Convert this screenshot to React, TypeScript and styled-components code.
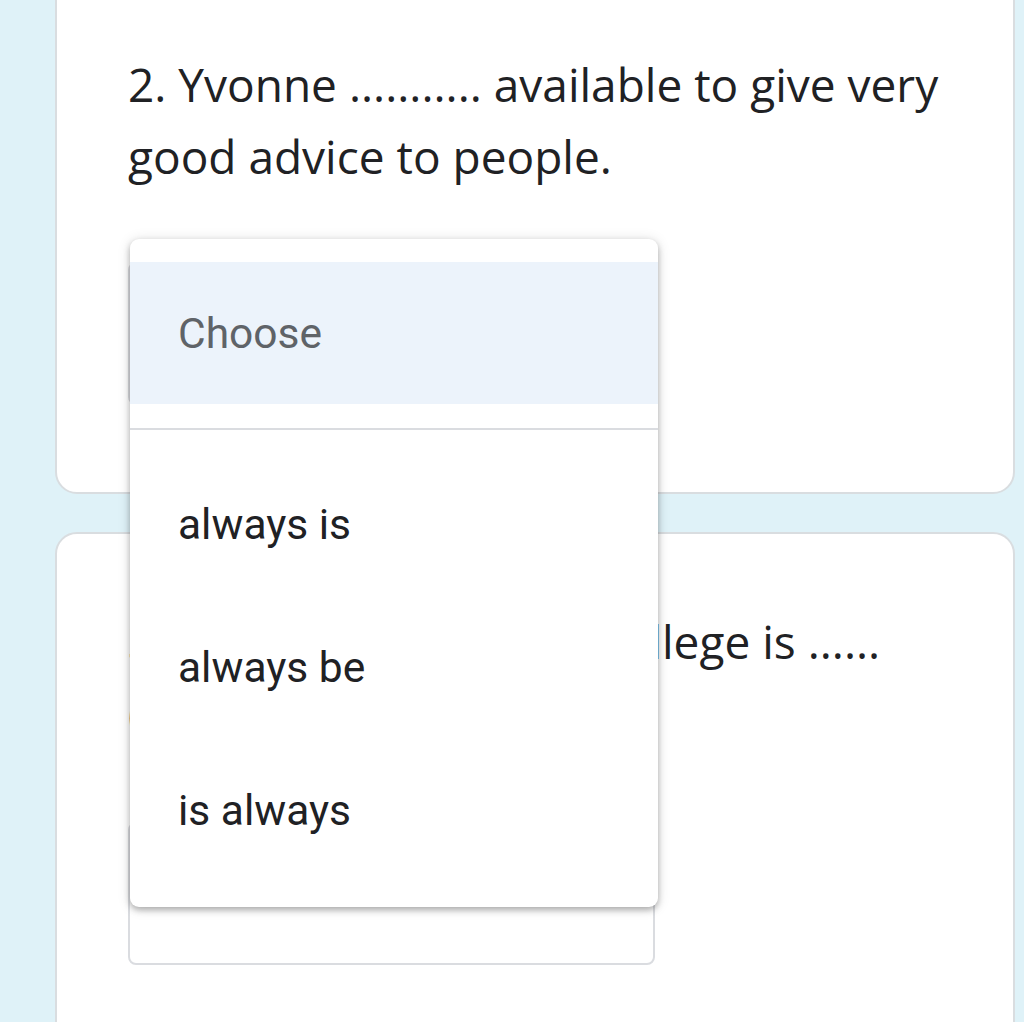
import React from "react";
import styled, { createGlobalStyle } from "styled-components";

const GlobalStyle = createGlobalStyle`
  html, body {
    margin: 0;
    padding: 0;
    background: #dff2f8;
    overflow: hidden;
  }
  * {
    box-sizing: border-box;
  }
`;

const Page = styled.main`
  width: 1024px;
  height: 1022px;
  overflow: hidden;
  padding: 0 9px 0 55px;
  display: flex;
  flex-direction: column;
  gap: 38px;
`;

const Card = styled.section<{ $first?: boolean }>`
  position: relative;
  background: #fff;
  border: 2px solid #d9dde0;
  border-radius: 22px;
  margin-top: ${({ $first }) => ($first ? "-40px" : "0")};
  padding: ${({ $first }) => ($first ? "86px" : "71px")} 40px 86px 71px;
  min-height: ${({ $first }) => ($first ? "534px" : "560px")};
`;

const Question = styled.h2`
  margin: 0;
  font-family: "Open Sans", "Noto Sans", sans-serif;
  font-weight: 400;
  font-size: 46px;
  line-height: 72px;
  color: #202124;
  white-space: nowrap;
`;

const SelectWrap = styled.div<{ $gap: number }>`
  position: relative;
  margin-top: ${({ $gap }) => $gap}px;
  width: 527px;
`;

const SelectBox = styled.div`
  height: 143px;
  border: 2px solid #dadce0;
  border-radius: 8px;
  background: #fff;
`;

const Menu = styled.ul`
  position: absolute;
  left: 2px;
  top: -23px;
  width: 528px;
  margin: 0;
  padding: 23px 0 25px;
  list-style: none;
  background: #fff;
  border-radius: 9px;
  box-shadow: 0 3px 6px rgba(0, 0, 0, 0.28), 0 1px 14px rgba(0, 0, 0, 0.12);
  z-index: 2;
`;

const Item = styled.li<{ $selected?: boolean }>`
  height: ${({ $selected }) => ($selected ? "142px" : "143px")};
  display: flex;
  align-items: center;
  padding-left: 48px;
  font-family: Roboto, "Liberation Sans", sans-serif;
  font-size: 42.5px;
  color: ${({ $selected }) => ($selected ? "#5f6368" : "#202124")};
  background: ${({ $selected }) => ($selected ? "#ecf3fb" : "transparent")};
`;

const Divider = styled.li`
  height: 2px;
  margin: 24px 0 23px;
  background: #dadce0;
`;

const options = ["always is", "always be", "is always"];

export default function App() {
  return (
    <>
      <GlobalStyle />
      <Page>
        <Card $first>
          <Question>
            2. Yvonne ........... available to give very
            <br />
            good advice to people.
          </Question>
          <SelectWrap $gap={70}>
            <SelectBox />
            <Menu>
              <Item $selected>Choose</Item>
              <Divider />
              {options.map((o) => (
                <Item key={o}>{o}</Item>
              ))}
            </Menu>
          </SelectWrap>
        </Card>
        <Card>
          <Question>
            3. Their most popular college is ......
            <br />
            (in the city).
          </Question>
          <SelectWrap $gap={73}>
            <SelectBox />
          </SelectWrap>
        </Card>
      </Page>
    </>
  );
}
